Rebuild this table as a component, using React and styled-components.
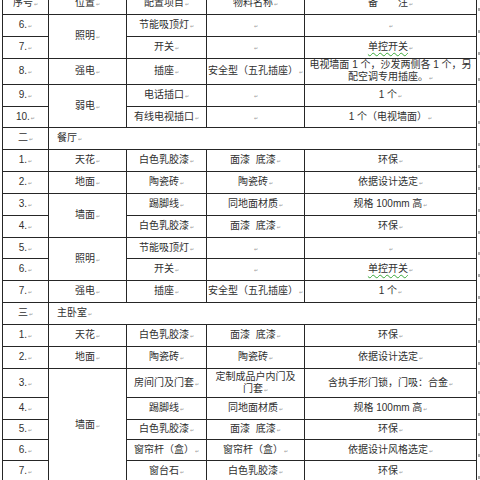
import React from "react";
import styled, { createGlobalStyle } from "styled-components";

const GlobalStyle = createGlobalStyle`
  html, body {
    margin: 0;
    padding: 0;
    background: #fff;
    overflow: hidden;
  }
  body {
    font-family: "Liberation Sans", "Noto Sans CJK SC", sans-serif;
  }
`;

//Each row has its height (inner, without the 1px rule) and its cells.
//A cell is a string, or an object when it spans rows/columns or needs something extra.
const rows = [
  { h: 21, cells: ["序号", "位置", "配置项目", "物料名称", "备　　注"] },
  { h: 21, cells: ["6.", { t: "照明", rs: 2 }, "节能吸顶灯", "", ""] },
  { h: 21, cells: ["7.", "开关", "", { t: "单控开关", wavy: true }] },
  {
    h: 25,
    cells: [
      "8.",
      "强电",
      "插座",
      "安全型（五孔插座）",
      { t: ["电视墙面 1 个，沙发两侧各 1 个，另", "配空调专用插座。"] },
    ],
  },
  { h: 21, cells: ["9.", { t: "弱电", rs: 2 }, "电话插口", "", "1 个"] },
  { h: 20, cells: ["10.", "有线电视插口", "", "1 个（电视墙面）"] },

  { h: 21, cells: ["二", { t: "餐厅", cs: 4, left: true }] },
  { h: 21, cells: ["1.", "天花", "白色乳胶漆", "面漆  底漆", "环保"] },
  { h: 21, cells: ["2.", "地面", "陶瓷砖", "陶瓷砖", "依据设计选定"] },
  { h: 21, cells: ["3.", { t: "墙面", rs: 2 }, "踢脚线", "同地面材质", "规格 100mm 高"] },
  { h: 21, cells: ["4.", "白色乳胶漆", "面漆  底漆", "环保"] },
  { h: 20, cells: ["5.", { t: "照明", rs: 2 }, "节能吸顶灯", "", ""] },
  { h: 21, cells: ["6.", "开关", "", { t: "单控开关", wavy: true }] },
  { h: 21, cells: ["7.", "强电", "插座", "安全型（五孔插座）", "1 个"] },

  { h: 21, cells: ["三", { t: "主卧室", cs: 4, left: true }] },
  { h: 21, cells: ["1.", "天花", "白色乳胶漆", "面漆  底漆", "环保"] },
  { h: 21, cells: ["2.", "地面", "陶瓷砖", "陶瓷砖", "依据设计选定"] },
  {
    h: 28,
    cells: [
      "3.",
      { t: "墙面", rs: 5 },
      "房间门及门套",
      { t: ["定制成品户内门及", "门套"] },
      "含执手形门锁，门吸：合金",
    ],
  },
  { h: 21, cells: ["4.", "踢脚线", "同地面材质", "规格 100mm 高"] },
  { h: 19, cells: ["5.", "白色乳胶漆", "面漆  底漆", "环保"] },
  { h: 20, cells: ["6.", "窗帘杆（盒）", "窗帘杆（盒）", "依据设计风格选定"] },
  { h: 21, cells: ["7.", "窗台石", "白色乳胶漆", "环保"] },
];

const template = rows.map((r) => `${r.h}px`).join(" ");

const Cell = ({ cell }) => {
  const c = typeof cell === "string" ? { t: cell } : cell;
  const lines = Array.isArray(c.t) ? c.t : [c.t];
  return (
    <Box $rs={c.rs || 1} $cs={c.cs || 1} $left={c.left}>
      <Text>
        {lines.map((line, i) => (
          <Line key={i} $wavy={c.wavy}>
            {line}
            {i === lines.length - 1 && <Mark>↵</Mark>}
          </Line>
        ))}
      </Text>
    </Box>
  );
};

const App = () => {
  return (
    <>
      <GlobalStyle />
      <Page>
        <Sheet $rows={template}>
          {rows.map((r, i) =>
            r.cells.map((cell, j) => <Cell key={`${i}-${j}`} cell={cell} />)
          )}
        </Sheet>
        <RowEnds $rows={template}>
          {rows.map((r, i) => (
            <RowEnd key={i} />
          ))}
        </RowEnds>
      </Page>
    </>
  );
};

const Page = styled.div`
  display: flex;
  align-items: flex-start;
  margin-top: -8px;
  padding-left: 2px;
`;

const Sheet = styled.div`
  display: grid;
  grid-template-columns: 45px 77px 79px 97px 171px;
  grid-template-rows: ${(p) => p.$rows};
  gap: 1px;
  background: #262626;
  border: 1px solid #262626;
  border-left-width: 1px;
`;

const Box = styled.div`
  grid-row: span ${(p) => p.$rs};
  grid-column: span ${(p) => p.$cs};
  background: #fff;
  display: flex;
  align-items: center;
  justify-content: ${(p) => (p.$left ? "flex-start" : "center")};
  padding: ${(p) => (p.$left ? "0 0 0 8px" : "0 3px")};
  overflow: hidden;
`;

const Text = styled.div`
  display: flex;
  flex-direction: column;
  align-items: center;
  font-size: 10px;
  line-height: 12px;
  color: #303030;
  white-space: pre;
`;

const Line = styled.span`
  text-decoration: ${(p) => (p.$wavy ? "underline wavy #3aa83a" : "none")};
  text-decoration-thickness: 1px;
  text-underline-offset: 2px;
`;

const Mark = styled.span`
  font-family: "DejaVu Sans", sans-serif;
  font-size: 5px;
  color: #9a9a9a;
  margin-left: 1px;
  text-decoration: none;
  display: inline-block;
`;

const RowEnds = styled.div`
  display: grid;
  grid-template-rows: ${(p) => p.$rows};
  row-gap: 1px;
  padding-top: 1px;
  width: 4px;
`;

const RowEnd = styled.div`
  align-self: end;
  justify-self: center;
  width: 2px;
  height: 3px;
  margin-bottom: 3px;
  background: #a8a8a8;
`;

export default App;
